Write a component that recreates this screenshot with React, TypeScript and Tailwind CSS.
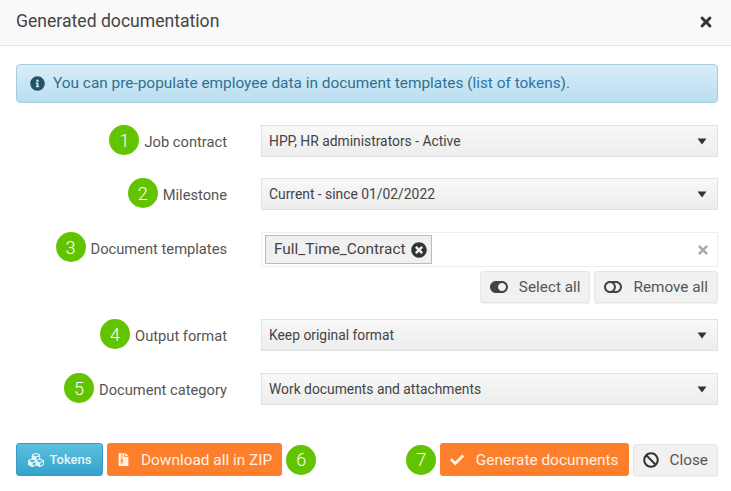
import { ReactNode } from "react";
import {
  FaBan,
  FaCheck,
  FaCubes,
  FaFileArchive,
  FaInfoCircle,
  FaTimes,
  FaTimesCircle,
  FaToggleOff,
  FaToggleOn,
} from "react-icons/fa";

function Badge({ n }: { n: number }) {
  return (
    <span className="flex h-[30px] w-[30px] shrink-0 items-center justify-center rounded-full bg-[#62c400] text-[18px] font-light text-white">
      {n}
    </span>
  );
}

function Row({ n, label, children }: { n: number; label: string; children: ReactNode }) {
  return (
    <div className="flex items-start gap-[34px]">
      <div className="flex h-[30px] w-[211px] shrink-0 items-center justify-end gap-[5px] text-[14.7px] text-[#555555]">
        <Badge n={n} />
        <span className="pt-[4px]">{label}</span>
      </div>
      <div className="min-w-0 flex-1">{children}</div>
    </div>
  );
}

function Select({ value }: { value: string }) {
  return (
    <div className="flex h-[32px] items-center justify-between border border-[#e2e2e2] bg-gradient-to-b from-[#f8f8f8] to-[#ededed] pl-[7px] pr-[10px] text-[13.85px] text-[#444444]">
      <span>{value}</span>
      <svg width="10" height="7" viewBox="0 0 10 7" className="fill-[#333333]">
        <polygon points="0.5,0.5 9.5,0.5 5,6.5" />
      </svg>
    </div>
  );
}

function GreyButton({ icon, label }: { icon: ReactNode; label: string }) {
  return (
    <button className="flex h-[32px] items-center gap-[11px] rounded-[3px] border border-[#e6e6e6] bg-[#f1f1f1] px-[9px] text-[15.3px] text-[#555555] shadow-[0_1px_1px_rgba(0,0,0,0.06)]">
      {icon}
      <span className="pt-[1px]">{label}</span>
    </button>
  );
}

function OrangeButton({ icon, label, gap }: { icon: ReactNode; label: string; gap: string }) {
  return (
    <button className={`flex h-[33px] items-center rounded-[3px] bg-[#fe7f2b] px-[10px] text-[15.4px] text-[#fff1e4] ${gap}`}>
      {icon}
      <span className="pt-[2px]">{label}</span>
    </button>
  );
}

export default function App() {
  return (
    <div className="h-[491px] w-[731px] overflow-hidden bg-white font-['Roboto',sans-serif]">
      <div className="flex h-[46px] items-center justify-between border-b border-[#e5e5e5] bg-[#f9f9f9] pb-[2px] pl-[16px] pr-[17px]">
        <h1 className="text-[17.6px] text-[#444444]">Generated documentation</h1>
        <FaTimes className="text-[16px] text-[#333333]" />
      </div>

      <div className="pl-[16px] pr-[13px] pt-[18px]">
        <div className="flex h-[39px] items-center gap-[8px] rounded-[4px] border border-[#a3cde3] bg-gradient-to-b from-[#d9edf7] to-[#b9def0] px-[13px] text-[15.4px] text-[#31708f]">
          <FaInfoCircle className="text-[15px] text-[#245269]" />
          <span>
            You can pre-populate employee data in document templates (
            <span className="text-[#2f74a8]">list of tokens</span>).
          </span>
        </div>

        <div className="mt-[22px] flex flex-col">
          <Row n={1} label="Job contract">
            <Select value="HPP, HR administrators - Active" />
          </Row>
          <div className="mt-[21px]">
            <Row n={2} label="Milestone">
              <Select value="Current - since 01/02/2022" />
            </Row>
          </div>
          <div className="mt-[22px]">
            <Row n={3} label="Document templates">
              <div className="flex h-[35px] items-center justify-between border border-[#eeeeee] pl-[3px] pr-[7px]">
                <span className="flex h-[29px] items-center gap-[5px] border border-[#bbbbbb] bg-[#f0f0f0] pl-[8px] pr-[4px] text-[15.4px] text-[#444444]">
                  Full_Time_Contract
                  <FaTimesCircle className="text-[16px] text-[#333333]" />
                </span>
                <FaTimes className="text-[14px] text-[#aaaaaa]" />
              </div>
              <div className="mt-[4px] flex justify-end gap-[4px]">
                <GreyButton icon={<FaToggleOn className="text-[18px] text-[#444444]" />} label="Select all" />
                <GreyButton icon={<FaToggleOff className="text-[18px] text-[#444444]" />} label="Remove all" />
              </div>
            </Row>
          </div>
          <div className="mt-[16px]">
            <Row n={4} label="Output format">
              <Select value="Keep original format" />
            </Row>
          </div>
          <div className="mt-[22px]">
            <Row n={5} label="Document category">
              <Select value="Work documents and attachments" />
            </Row>
          </div>
        </div>

        <div className="mt-[38px] flex items-center justify-between">
          <div className="flex items-center gap-[4px]">
            <button className="flex h-[33px] items-center gap-[6px] rounded-[3px] border border-[#3a9cc4] bg-gradient-to-b from-[#5bc0de] to-[#35a2cb] px-[10.5px] text-[13px] font-medium text-[#e8f6fb]">
              <FaCubes className="text-[16px]" />
              Tokens
            </button>
            <OrangeButton gap="gap-[11px]" icon={<FaFileArchive className="text-[13px]" />} label="Download all in ZIP" />
            <Badge n={6} />
          </div>
          <div className="flex items-center gap-[4px]">
            <Badge n={7} />
            <OrangeButton gap="gap-[11.5px]" icon={<FaCheck className="text-[14px]" />} label="Generate documents" />
            <GreyButton icon={<FaBan className="text-[16px] text-[#333333]" />} label="Close" />
          </div>
        </div>
      </div>
    </div>
  );
}
